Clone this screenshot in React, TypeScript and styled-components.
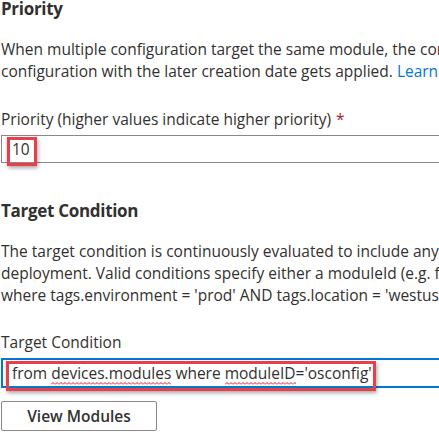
import styled, { createGlobalStyle } from "styled-components";

const GlobalStyle = createGlobalStyle`
  html, body {
    margin: 0;
    padding: 0;
    background: #ffffff;
    overflow: hidden;
  }
  body {
    font-family: "Open Sans", "Noto Sans", sans-serif;
    color: #323130;
  }
`;

const squiggle =
  "url(\"data:image/svg+xml,%3Csvg xmlns='http://www.w3.org/2000/svg' width='4' height='3'%3E%3Cpath d='M0 2.5 L2 0.5 L4 2.5' fill='none' stroke='%23e81123' stroke-width='1'/%3E%3C/svg%3E\")";

const Page = styled.div`
  width: 720px;
  padding: 0 0 0 1px;
`;

const Section = styled.section<{ $gap?: number }>`
  display: flex;
  flex-direction: column;
  margin-top: ${({ $gap }) => $gap ?? 0}px;
`;

const Heading = styled.h2`
  margin: 0;
  font-size: 17px;
  line-height: 18px;
  font-weight: 700;
  letter-spacing: -0.3px;
  color: #323130;
`;

const Paragraph = styled.p`
  margin: 20px 0 0;
  font-size: 15.5px;
  line-height: 22px;
  white-space: nowrap;
`;

const Link = styled.a`
  color: #0078d4;
  text-decoration: none;
`;

const Label = styled.label<{ $gap?: number }>`
  margin-top: ${({ $gap }) => $gap ?? 26}px;
  font-size: 15.5px;
  line-height: 22px;
`;

const Required = styled.span`
  color: #a4262c;
  margin-left: 5px;
`;

const FieldWrap = styled.div`
  position: relative;
  margin-top: 5px;
`;

const Field = styled.div<{ $focused?: boolean }>`
  box-sizing: border-box;
  height: ${({ $focused }) => ($focused ? "30px" : "28px")};
  border: ${({ $focused }) => ($focused ? "2px solid #0078d4" : "1px solid #8a8886")};
  padding: 0 ${({ $focused }) => ($focused ? "9px" : "10px")};
  display: flex;
  align-items: center;
  font-size: 15.5px;
  white-space: nowrap;
`;

/* spell-check squiggle under the word */
const Misspelled = styled.span`
  padding-bottom: 1px;
  background-image: ${squiggle};
  background-repeat: repeat-x;
  background-position: left bottom;
  background-size: 4px 3px;
`;

const Caret = styled.span`
  display: inline-block;
  width: 1px;
  height: 19px;
  background: #323130;
  margin-left: 2px;
`;

const Highlight = styled.div`
  position: absolute;
  box-sizing: border-box;
  border: 3px solid #e8404a;
  box-shadow: 1px 2px 4px rgba(0, 0, 0, 0.35);
  pointer-events: none;
`;

const Button = styled.button`
  align-self: flex-start;
  margin-top: 13px;
  box-sizing: border-box;
  width: 156px;
  height: 30px;
  border: 1px solid #8a8886;
  border-radius: 2px;
  background: #ffffff;
  font-family: inherit;
  font-size: 15.5px;
  font-weight: 600;
  color: #323130;
`;

const App = () => {
  return (
    <Page>
      <GlobalStyle />
      <Section>
        <Heading>Priority</Heading>
        <Paragraph>
          When multiple configuration target the same module, the configuration with the higher priority wins.
          <br />
          configuration with the later creation date gets applied. <Link href="#">Learn more</Link>
        </Paragraph>
        <Label>
          Priority (higher values indicate higher priority)<Required>*</Required>
        </Label>
        <FieldWrap>
          <Field>10</Field>
          <Highlight style={{ left: 6, top: 2, width: 30, height: 29 }} />
        </FieldWrap>
      </Section>

      <Section $gap={39}>
        <Heading>Target Condition</Heading>
        <Paragraph>
          The target condition is continuously evaluated to include any new devices that meet the requirements
          <br />
          deployment. Valid conditions specify either a moduleId (e.g. from devices.modules where moduleId='x')
          <br />
          where tags.environment = 'prod' AND tags.location = 'westus'
        </Paragraph>
        <Label $gap={25}>Target Condition</Label>
        <FieldWrap>
          <Field $focused>
            from&nbsp;<Misspelled>devices.modules</Misspelled>&nbsp;where&nbsp;<Misspelled>moduleID</Misspelled>='osconfig'
            <Caret />
          </Field>
          <Highlight style={{ left: 5, top: 3, width: 370, height: 30 }} />
        </FieldWrap>
        <Button>View Modules</Button>
      </Section>
    </Page>
  );
};

export default App;
